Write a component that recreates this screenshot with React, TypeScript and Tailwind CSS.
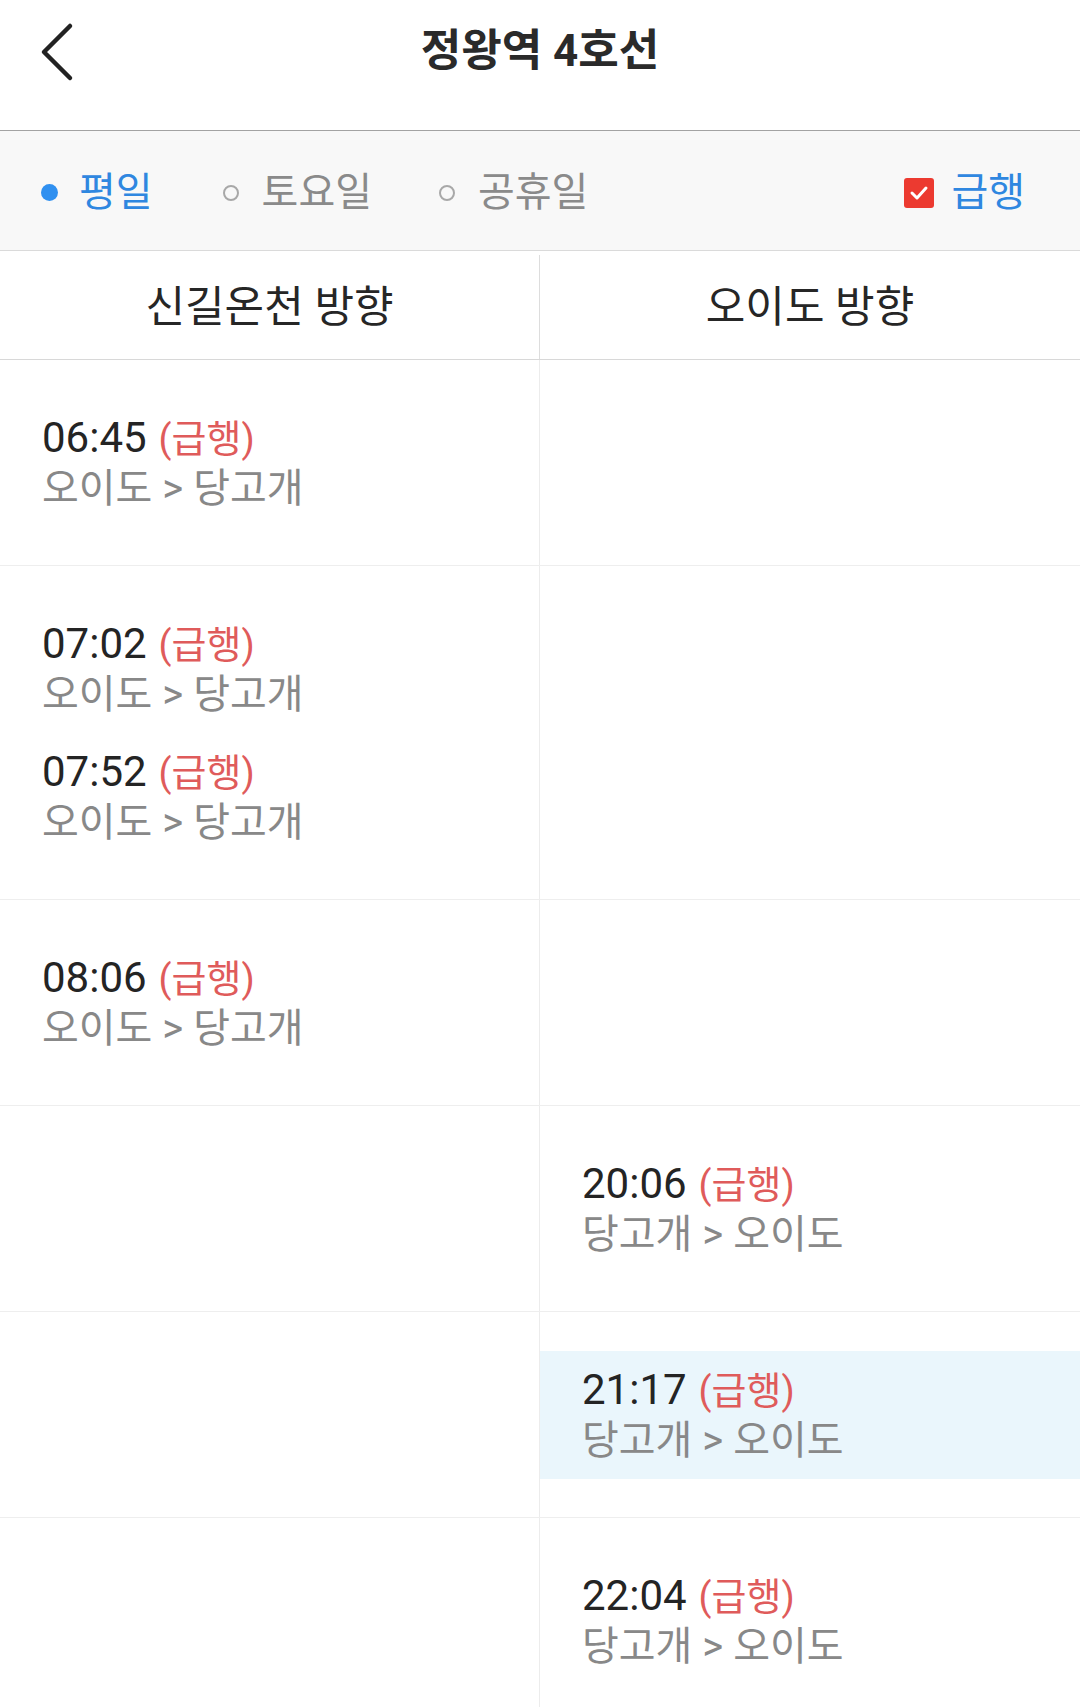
import React from 'react';

type Train = { time: string; route: string; highlight?: boolean };
type Row = { left: Train[]; right: Train[] };

const TO_DANGGOGAE = '오이도 > 당고개';
const TO_OIDO = '당고개 > 오이도';

const rows: Row[] = [
  { left: [{ time: '06:45', route: TO_DANGGOGAE }], right: [] },
  {
    left: [
      { time: '07:02', route: TO_DANGGOGAE },
      { time: '07:52', route: TO_DANGGOGAE },
    ],
    right: [],
  },
  { left: [{ time: '08:06', route: TO_DANGGOGAE }], right: [] },
  { left: [], right: [{ time: '20:06', route: TO_OIDO }] },
  { left: [], right: [{ time: '21:17', route: TO_OIDO, highlight: true }] },
  { left: [], right: [{ time: '22:04', route: TO_OIDO }] },
];

const font = { fontFamily: 'Roboto, "Noto Sans CJK KR", sans-serif' };

const TrainItem: React.FC<{ train: Train }> = ({ train }) => (
  <div
    className={`h-[128px] flex flex-col justify-center pl-[42px] ${
      train.highlight ? 'bg-[#eaf6fc]' : ''
    }`}
  >
    <div className="flex items-baseline leading-[49px]">
      <span className="text-[42px] text-[#242424]">{train.time}</span>
      <span className="ml-[12px] text-[38px] text-[#df5b5b]">(급행)</span>
    </div>
    <div className="text-[40px] leading-[49px] text-[#888888]">{train.route}</div>
  </div>
);

const App: React.FC = () => {
  return (
    <div className="w-[1080px] bg-white" style={font}>
      {/* header */}
      <header className="relative h-[131px] flex items-center justify-center border-b border-[#a3a3a3]">
        <svg
          className="absolute left-[38px] top-[22px]"
          width="40"
          height="60"
          viewBox="0 0 40 60"
          fill="none"
        >
          <path
            d="M32 4 L6 30 L32 56"
            stroke="#222"
            strokeWidth="4.5"
            strokeLinecap="round"
            strokeLinejoin="round"
          />
        </svg>
        <h1 className="text-[44px] font-bold text-[#2a2a2a] -mt-[28px]">정왕역 4호선</h1>
      </header>

      {/* filters */}
      <div className="h-[120px] bg-[#f8f8f8] border-b border-[#dadada] flex items-center pl-[41px] pr-[41px] pt-[4px] text-[40px]">
        <div className="flex items-center">
          <span className="w-[17px] h-[17px] rounded-full bg-[#3090f0]" />
          <span className="ml-[21px] text-[#2f87e0]">평일</span>
        </div>
        <div className="flex items-center ml-[70px]">
          <span className="w-[16px] h-[16px] rounded-full border-[2.5px] border-[#a8a8a8]" />
          <span className="ml-[23px] text-[#8a8a8a]">토요일</span>
        </div>
        <div className="flex items-center ml-[67px]">
          <span className="w-[16px] h-[16px] rounded-full border-[2.5px] border-[#a8a8a8]" />
          <span className="ml-[23px] text-[#8a8a8a]">공휴일</span>
        </div>
        <div className="flex items-center ml-auto mr-[14px]">
          <span className="w-[30px] h-[30px] rounded-[3px] bg-[#ec3a30] flex items-center justify-center">
            <svg width="20" height="16" viewBox="0 0 20 16" fill="none">
              <path
                d="M3 8 L8 13 L17 3"
                stroke="#fff"
                strokeWidth="3"
                strokeLinecap="round"
                strokeLinejoin="round"
              />
            </svg>
          </span>
          <span className="ml-[17px] text-[#2f87e0]">급행</span>
        </div>
      </div>

      {/* direction headers */}
      <div className="flex h-[109px] border-b border-[#d8d8d8] text-[43px] text-[#262626] pt-[4px]">
        <div className="w-[540px] flex items-center justify-center border-r border-[#dddddd]">
          신길온천 방향
        </div>
        <div className="flex-1 flex items-center justify-center">오이도 방향</div>
      </div>

      {/* timetable */}
      {rows.map((row, i) => (
        <div key={i} className="flex border-b border-[#eeeeee]">
          <div className="w-[540px] pt-[39px] pb-[38px] border-r border-[#ececec]">
            {row.left.map((t) => (
              <TrainItem key={t.time} train={t} />
            ))}
            {row.left.length === 0 && <div className="h-[128px]" />}
          </div>
          <div className="flex-1 pt-[39px] pb-[38px]">
            {row.right.map((t) => (
              <TrainItem key={t.time} train={t} />
            ))}
          </div>
        </div>
      ))}
    </div>
  );
};

export default App;
